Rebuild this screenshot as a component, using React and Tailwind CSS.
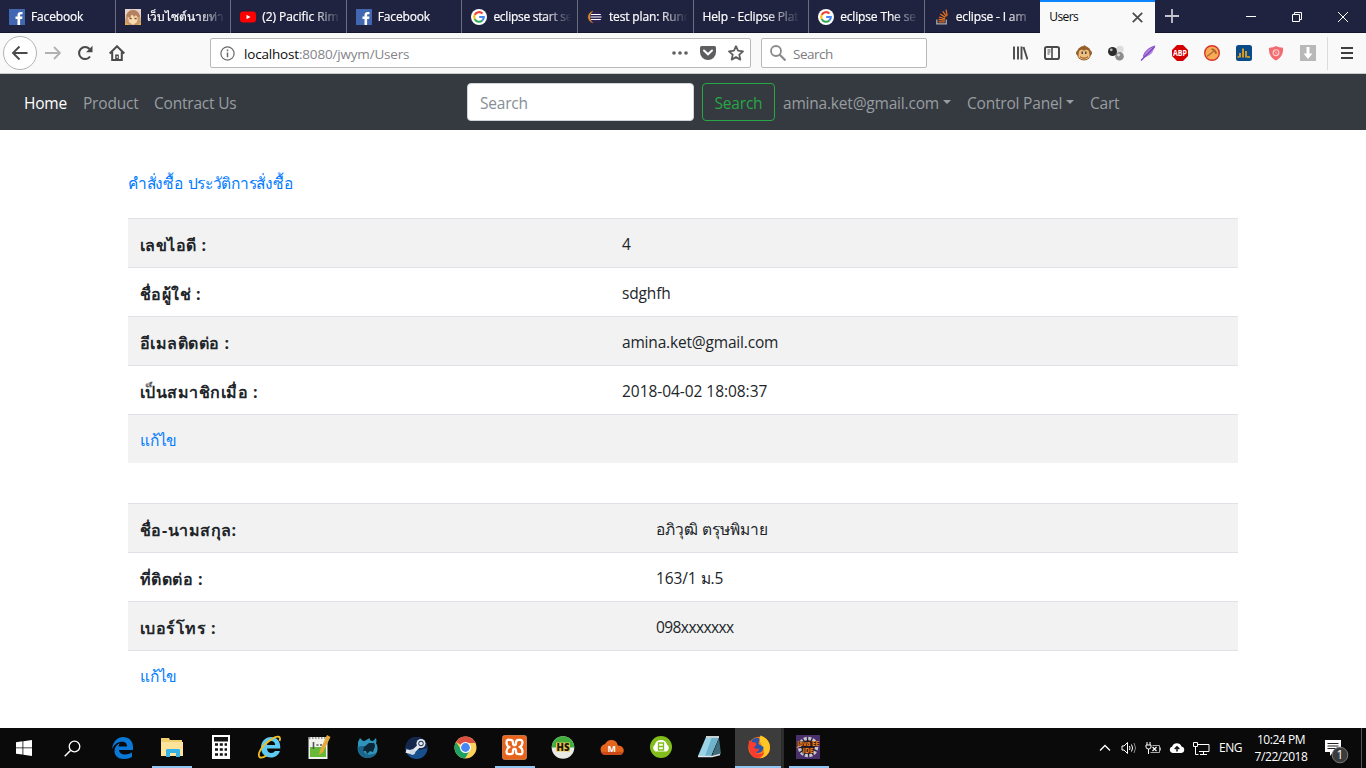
import React from "react";

const ui = "font-['Open_Sans','Noto_Sans',sans-serif]";

/* ---------- tab favicons ---------- */
const FacebookIcon = () => (
  <svg width="16" height="16" viewBox="0 0 16 16" className="shrink-0">
    <rect width="16" height="16" fill="#4267b2" />
    <path d="M8.500 16V10h-2V7.500h2V6c0-2 1.200-3 3-3h2v2.300h-1.300c-.9 0-1.100.5-1.100 1.200v1h2.400l-.4 2.500h-2v6z" fill="#fff" />
  </svg>
);
const AnimeIcon = () => (
  <svg width="16" height="16" viewBox="0 0 16 16" className="shrink-0">
    <rect width="16" height="16" fill="#e3d3cb" />
    <path d="M0 16C0 7 2 1 8 1s8 6 8 15z" fill="#c99a72" />
    <path d="M3 8c2-3 8-3 10 0l-1 5-4 3-4-3z" fill="#f8dcae" />
    <path d="M1 7c2-7 11-8 14 0l-2 2-2-3-2 2-2-3-2 4-2-1z" fill="#b5805f" />
    <path d="M4.500 9.500h2.200M9.500 9.500h2.200" stroke="#8a4a3c" strokeWidth="1.300" />
    <path d="M0 16v-3l4 3zM16 16v-3l-4 3z" fill="#e6b04f" />
  </svg>
);
const YoutubeIcon = () => (
  <svg width="16" height="16" viewBox="0 0 16 16" className="shrink-0">
    <rect x="0" y="2.500" width="16" height="11" rx="3" fill="#f00" />
    <path d="M6.500 5.700v4.600l4-2.300z" fill="#fff" />
  </svg>
);
const GoogleIcon = () => (
  <svg width="16" height="16" viewBox="0 0 16 16" className="shrink-0">
    <circle cx="8" cy="8" r="8" fill="#fff" />
    <g fill="none" strokeWidth="2.100">
      <path d="M11.500 4.600A4.800 4.800 0 0 0 3.700 5.900" stroke="#ea4335" />
      <path d="M3.700 5.900a4.800 4.800 0 0 0 0 4.200" stroke="#fbbc05" />
      <path d="M3.700 10.100a4.800 4.800 0 0 0 7.600 1.300" stroke="#34a853" />
      <path d="M11.300 11.400A4.500 4.500 0 0 0 12.800 8H8.200" stroke="#4285f4" />
    </g>
  </svg>
);
const EclipseIcon = () => (
  <svg width="16" height="16" viewBox="0 0 16 16" className="shrink-0">
    <path d="M6 2C-.500 4-.500 12 6 14 3 11.500 3 4.500 6 2z" fill="#e0892b" stroke="#e0892b" strokeWidth=".3" />
    <circle cx="8.900" cy="8" r="5.900" fill="#2c2255" />
    <path d="M4 5.500h9.800M3.500 8h11M4 10.500h9.800" stroke="#fff" strokeWidth="1.200" />
  </svg>
);
const StackIcon = () => (
  <svg width="16" height="16" viewBox="0 0 16 16" className="shrink-0">
    <path d="M2.800 10.500v4.300h9.500v-4.300" fill="none" stroke="#a9abb0" strokeWidth="1.300" />
    <g stroke="#e8701a" strokeWidth="1.300">
      <path d="M4.500 12.800h6.300M4.600 10.500l6.200.7M5 8l6 1.800M6.200 5l5.300 3.400M8.800 2.300l3.700 5M12 .700l1.200 6" />
    </g>
  </svg>
);

const tabs = [
  [FacebookIcon, "Facebook", "tracking-[-0.150px]"],
  [AnimeIcon, "เว็บไซต์นายท่า", "tracking-[-0.100px]"],
  [YoutubeIcon, "(2) Pacific Rim", "tracking-[-0.050px]"],
  [FacebookIcon, "Facebook", "tracking-[-0.150px]"],
  [GoogleIcon, "eclipse start se", "tracking-[-0.250px]"],
  [EclipseIcon, "test plan: Runn", "tracking-[-0.150px]"],
  [null, "Help - Eclipse Plat", "tracking-[-0.150px]"],
  [GoogleIcon, "eclipse The se", "tracking-[-0.150px]"],
  [StackIcon, "eclipse - I am", "tracking-[-0.150px]"],
];

function TabBar() {
  return (
    <div className="flex h-[33px] bg-[#202340] text-[12px] text-white border-b border-[#15172e]">
      {tabs.map(([Icon, label, track], i) => (
        <div key={i} className={"flex h-[33px] w-[115.600px] shrink-0 items-center pl-[9px] " + (i < 8 ? "border-r border-[#6b6d80]" : "")}>
          {Icon && <span className="mr-[6px]"><Icon /></span>}
          <span className={"block h-[20px] overflow-hidden whitespace-nowrap leading-[20px] [-webkit-text-stroke:0.2px_#fff] [mask-image:linear-gradient(to_right,#000_64%,transparent_98%)] " + (Icon ? "w-[80px] " : "w-[99px] ") + track}>
            {label}
          </span>
        </div>
      ))}
      <div className="flex h-[33px] w-[115px] shrink-0 items-center justify-between border-t-2 border-[#0a84ff] bg-[#f9f9fa] pl-[9px] pr-[12px] text-[#0c0c0d]">
        <span className="pb-[1px] tracking-[-0.600px]">Users</span>
        <svg className="mb-[1px]" width="11" height="11" viewBox="0 0 10 10"><path d="M.700.700l8.600 8.600M9.300.700L.700 9.300" stroke="#4c4c4f" strokeWidth="1.600" /></svg>
      </div>
      <div className="flex flex-1 items-center pl-[10px]">
        <svg width="14" height="14" viewBox="0 0 14 14"><path d="M7 0v14M0 7h14" stroke="#c5c6cf" strokeWidth="1.800" /></svg>
        <div className="ml-auto flex items-center">
          <svg width="46" height="32" viewBox="0 0 46 32"><path d="M18 16.500h10" stroke="#fff" /></svg>
          <svg width="46" height="32" viewBox="0 0 46 32"><path d="M18.500 14.500h7v7h-7zM20.500 14.500v-2h7v7h-2" fill="none" stroke="#fff" /></svg>
          <svg width="46" height="32" viewBox="0 0 46 32"><path d="M18 12l10 10M28 12L18 22" stroke="#fff" /></svg>
        </div>
      </div>
    </div>
  );
}

/* ---------- toolbar ---------- */
const extensions = [
  <g key="lib"><path d="M2 1.500v13M6 1.500v13M9.500 1.500v13M11.500 2l4 12.500" stroke="#4a4a4c" strokeWidth="1.900" fill="none" /></g>,
  <g key="side" fill="none" stroke="#4a4a4c"><rect x="1" y="2" width="14" height="12" rx="1.800" strokeWidth="2" /><path d="M8 2v12" strokeWidth="1.600" /><path d="M3.500 5h3M3.500 7h3M3.500 9h2" /></g>,
  <g key="monkey"><circle cx="2.200" cy="8" r="2.200" fill="#8b5a2b" /><circle cx="13.800" cy="8" r="2.200" fill="#8b5a2b" /><circle cx="8" cy="8.300" r="7.200" fill="#94602a" /><path d="M6 2l3-2 1 3z" fill="#94602a" /><path d="M2.800 8c0-4 4.200-4 5.200-2 1-2 5.200-2 5.200 2l.5 3.500c-2 4-9.400 4-11.400 0z" fill="#eebf7e" /><path d="M6.200 6.500v2.500M9.800 6.500v2.500" stroke="#333" strokeWidth="1.300" /><path d="M4 11.500c2 2.200 6 2.200 8 0" stroke="#8a4b1f" fill="none" /></g>,
  <g key="balls"><circle cx="12" cy="4.500" r="3.700" fill="#dcdcdc" /><circle cx="11.500" cy="11.300" r="4.300" fill="#8c8c8c" /><circle cx="10.500" cy="10" r="1.400" fill="#ddd" /><circle cx="4.500" cy="6.500" r="4.500" fill="#2c2c2c" /><circle cx="3.300" cy="4.800" r="1.400" fill="#bbb" /></g>,
  <g key="feather"><path d="M15.500.500C9 2 3.500 6 2.800 12.500 8 12 12 9 12.800 6.500z" fill="#b48ae2" /><path d="M14.500 2L1 15.500" stroke="#7a3fbd" strokeWidth="1.300" /><path d="M15 1C9 3 5 6 3.500 11.500" stroke="#8d55cc" fill="none" /></g>,
  <g key="abp"><path d="M5 0h6l5 5v6l-5 5H5l-5-5V5z" fill="#d40000" /><text x="8" y="11" fontSize="8" fontWeight="700" fill="#fff" textAnchor="middle" textLength="14" lengthAdjust="spacingAndGlyphs">ABP</text></g>,
  <g key="hammer"><circle cx="8" cy="8" r="7.300" fill="#f8ab55" stroke="#d8322a" strokeWidth="1.400" /><path d="M3 11.500L10 6" stroke="#b06a35" strokeWidth="1.400" /><path d="M7.500 4.200q3.500.3 4.700 4.500" stroke="#a86030" strokeWidth="1.800" fill="none" /></g>,
  <g key="chart"><rect width="16" height="16" rx="2.500" fill="#0a4a86" /><path d="M4 12.500V8M7 12.500V3.500M10 12.500V6M11 12h3M1.500 12h1.500" stroke="#f5a81c" strokeWidth="1.700" /></g>,
  <g key="shield"><path d="M8 1q3 1.800 7 1.800C15.500 9 13 13 8 15.500 3 13 .500 9 1 2.800 5 2.800 8 1 8 1z" fill="#f36a6f" /><circle cx="8" cy="7.700" r="2.900" fill="none" stroke="#fbd0d0" strokeWidth="1.100" /><path d="M6.300 6.200l3.400 3" stroke="#fbd0d0" /></g>,
  <g key="down"><rect width="16" height="16" fill="#b8b8b8" /><path d="M6.500 2h3v6.500h3L8 14 3.500 8.500h3z" fill="#fff" /></g>,
];

function Toolbar() {
  return (
    <div className="flex h-[41px] items-center border-b border-[#c9c9cc] bg-[#f9f9fa]">
      <div className="ml-[3px] flex h-[34px] w-[34px] items-center justify-center rounded-full border border-[#b4b4b6] bg-white">
        <svg width="18" height="16" viewBox="0 0 18 16"><path d="M16.500 8H2M8.500 1.500L2 8l6.500 6.500" fill="none" stroke="#4a4a4c" strokeWidth="1.900" /></svg>
      </div>
      <svg className="ml-[8px]" width="16" height="16" viewBox="0 0 16 16"><path d="M0 8h14M9 2l6 6-6 6" fill="none" stroke="#b2b2b4" strokeWidth="1.900" /></svg>
      <svg className="ml-[16px]" width="16" height="16" viewBox="0 0 16 16"><path d="M13 11.500A6 6 0 1 1 12.500 4" fill="none" stroke="#4a4a4c" strokeWidth="2.100" /><path d="M15.500.800v6.500H9z" fill="#4a4a4c" /></svg>
      <svg className="ml-[16px]" width="16" height="16" viewBox="0 0 16 16"><path d="M.700 8.500L8 1.300l7.300 7.200M3.200 7v8h9.600V7" fill="none" stroke="#4a4a4c" strokeWidth="2" /><path d="M6.200 9.500h3.600v5.500H6.200z" fill="#4a4a4c" /><path d="M8.200 11v2" stroke="#fff" /></svg>

      <div className="ml-[85px] flex h-[30px] w-[541px] items-center rounded-[2px] border border-[#b9b9bb] bg-white pl-[9px] pr-[6px]">
        <svg width="15" height="15" viewBox="0 0 15 15"><circle cx="7.500" cy="7.500" r="6.600" fill="none" stroke="#6a6a6c" strokeWidth="1.200" /><path d="M7.500 6.500v4.800M7.500 3.500v1.700" stroke="#6a6a6c" strokeWidth="1.500" /></svg>
        <span className="ml-[9px] pt-[2px] text-[13.500px] tracking-[-0.180px] text-[#85858a]"><span className="text-[#0c0c0d]">localhost</span>:8080/jwym/Users</span>
        <svg className="ml-auto" width="16" height="16" viewBox="0 0 16 16" fill="#5e5e60"><circle cx="2" cy="8" r="1.800" /><circle cx="8" cy="8" r="1.800" /><circle cx="14" cy="8" r="1.800" /></svg>
        <svg className="ml-[12px]" width="16" height="16" viewBox="0 0 16 16"><path d="M1.500 1h13Q16 1 16 2.500V7a8 8 0 0 1-16 0V2.500Q0 1 1.500 1z" fill="#5e5e60" /><path d="M4 5.500l4 3.800 4-3.800" fill="none" stroke="#fff" strokeWidth="2" strokeLinecap="round" /></svg>
        <svg className="ml-[12px]" width="16" height="16" viewBox="0 0 16 16"><path d="M8 1.200l2 4.500 5 .6-3.700 3.300 1 5L8 12.100l-4.300 2.500 1-5L1 6.300l5-.6z" fill="none" stroke="#5e5e60" strokeWidth="1.800" strokeLinejoin="round" /></svg>
      </div>

      <div className="ml-[10px] flex h-[30px] w-[166px] items-center rounded-[2px] border border-[#b9b9bb] bg-white pl-[8px]">
        <svg width="16" height="16" viewBox="0 0 16 16"><circle cx="6" cy="6" r="5" fill="none" stroke="#8a8a8c" strokeWidth="1.800" /><path d="M9.500 9.500l6 6" stroke="#8a8a8c" strokeWidth="2.200" /></svg>
        <span className="ml-[7px] pt-[2px] text-[13.500px] tracking-[-0.500px] text-[#7c7c80]">Search</span>
      </div>

      <div className="ml-[77px] flex">
        {extensions.map((drawing, i) => (
          <div key={i} className="flex w-[32px] justify-center"><svg width="16" height="16" viewBox="0 0 16 16">{drawing}</svg></div>
        ))}
      </div>
      <div className="ml-[3px] h-[33px] w-px bg-[#dcdcde]" />
      <svg className="ml-[13px]" width="12" height="14" viewBox="0 0 12 14"><path d="M0 2h12M0 7h12M0 12h12" stroke="#3e3e40" strokeWidth="2" /></svg>
    </div>
  );
}

/* ---------- page ---------- */
const Caret = () => <span className="ml-[4px] mt-[-4px] h-0 w-0 border-x-[4.500px] border-t-[4.500px] border-x-transparent border-t-[#9a9da0]" />;

function Navbar() {
  return (
    <nav className="flex h-[56px] items-center bg-[#343a40] pl-[24px] text-[15.500px] tracking-[-0.200px] text-[#9a9da0]">
      <span className="w-[59px] pt-[4px] text-white">Home</span>
      <span className="w-[71px] pt-[4px]">Product</span>
      <span className="w-[313px] pt-[4px]">Contract Us</span>
      <div className="flex h-[38px] w-[227px] items-center rounded-[4px] border border-[#ced4da] bg-white pl-[12px] pt-[4px] text-[#868e96]">Search</div>
      <div className="ml-[8px] flex h-[38px] w-[73px] items-center justify-center rounded-[4px] border border-[#28a745] pt-[4px] text-[#28a745]">Search</div>
      <span className="ml-[8px] flex w-[184px] items-center whitespace-nowrap pt-[4px]">amina.ket@gmail.com<Caret /></span>
      <span className="flex w-[123px] items-center whitespace-nowrap pt-[4px]">Control Panel<Caret /></span>
      <span className="pt-[4px]">Cart</span>
    </nav>
  );
}

function Table({ rows, col }) {
  return (
    <div className="w-[1110px]">
      {rows.map(([label, value, track], i) => (
        <div key={i} className="flex h-[49px] items-center border-t border-[#dee2e6] pl-[12px] pt-[4px] odd:bg-[#f2f2f2]">
          {value ? (
            <>
              <span className={"text-[16px] font-bold tracking-[0.480px] " + col}>{label}</span>
              <span className={track}>{value}</span>
            </>
          ) : (
            <a className="tracking-[-0.250px] text-[#007bff]">{label}</a>
          )}
        </div>
      ))}
    </div>
  );
}

/* ---------- taskbar ---------- */
const apps = [
  { k: "edge", d: <path d="M2 14C3 6 8 2 13 2c6 0 10 4 10 10v3H9c.3 3 3 4.500 6 4.500 2.500 0 5-.7 7-2v4.300c-2 1.500-5 2.200-8 2.200-6 0-9.500-3.500-9.500-8 0-3.500 2-6.500 5.500-8-.9 1-1.300 2.200-1.400 3.500H17c0-3-1.500-4.800-5-4.800-4 0-7.500 2.300-10 7.300z" fill="#0a78d7" /> },
  { k: "files", on: true, d: <g><path d="M2 3h8l1 2h12v16H2z" fill="#f0cf6e" /><path d="M2 7h22v14H2z" fill="#fde49a" /><path d="M7 22v-7q0-1 1-1h12q1 0 1 1v7h-4v-4h-6v4z" fill="#35b3e6" /></g> },
  { k: "calc", d: <g><path d="M4 0h18v24H4z" fill="#fff" /><path d="M6 2h14v4.500H6z" fill="#111" /><path d="M7 9.500h12M7 14.500h12M7 19.500h12" stroke="#111" strokeWidth="2.500" strokeDasharray="3 1.800" /></g> },
  { k: "ie", d: <g transform="translate(1 0)"><path d="M13 2c6 0 9.500 4 9.300 11.500H9c.3 3 2 4.500 4.300 4.500 1.800 0 3-.8 3.600-2h5c-1.300 4-4.500 6.500-9 6.500C7 22.500 3 18.500 3 12.500S7.500 2 13 2zM9 10h8.200c-.2-2.500-1.700-4-4-4S9.300 7.500 9 10z" fill="#5ecbf4" /><path d="M21.500 6c2-5-2-6-9-1C4 10-1 19 1.500 22c1 1 4 .5 7-1.500" fill="none" stroke="#f3bd23" strokeWidth="1.800" /></g> },
  { k: "npp", d: <g><path d="M2.500 2h19v22h-19z" fill="#f1f2ec" /><path d="M4 12h16v10H4z" fill="#66ba35" /><path d="M3 3h18" stroke="#999" strokeDasharray="1.500 1.500" strokeWidth="2" /><path d="M7.500 7v7M10.500 10h2M14 10h2" stroke="#555" strokeWidth="1.600" /><path d="M21 0L14 15l-1 5 4-3L24.500 2z" fill="#e6a93b" /></g> },
  { k: "fox", d: <g><path d="M3 7l2-4 3 3q3 0 3-1l4-2q-1 3 3 3l3-3q1 4 0 5c4 7 0 14-7 15C7 24 1 18 3 10z" fill="#2f94bb" /><path d="M3 12C2 18 7 23 13 23q5 0 8-5-9 4-12-1-1-3 1-6l-4 0z" fill="#1a6589" /><path d="M9 12l5-4h5q2 3 0 6l-1 3-3-1-3 3-1-3H8z" fill="#0d2636" /></g> },
  { k: "steam", d: <g><circle cx="12.500" cy="13" r="11" fill="#17508c" /><path d="M1.500 13a11 11 0 0 1 22 0q-11 4-22 0z" fill="#14264a" /><path d="M2 16l6 1.500L15 11" stroke="#e5e9ee" strokeWidth="3.500" fill="none" /><circle cx="17" cy="8.500" r="4.500" fill="#e5e9ee" /><circle cx="17" cy="8.500" r="2.700" fill="#1d3355" /><circle cx="17" cy="8.500" r="1.800" fill="#e5e9ee" /><circle cx="8.500" cy="17" r="2.800" fill="#cfd8e3" /></g> },
  { k: "chrome", d: <g><circle cx="12.500" cy="12.500" r="11" fill="#fdd25a" /><path d="M12.500 12.500L3 7A11 11 0 0 1 22 7L22.500 8H12.500z" fill="#dc5044" /><path d="M3 7A11 11 0 0 0 12 23.500L17 15 8.500 15z" fill="#1da261" /><circle cx="12.500" cy="12.500" r="5.500" fill="#fff" /><circle cx="12.500" cy="12.500" r="4.400" fill="#4587f3" /></g> },
  { k: "xampp", on: true, d: <g><rect x="0.500" y="0.500" width="24" height="24" rx="2" fill="#e8641b" stroke="#f4a071" strokeWidth=".6" /><path d="M7 4.800h1.500q2.500 0 2.500 2.700v.5q0 2.200 1.500 2.200T14 8v-.5q0-2.700 2.500-2.700H18q2.500 0 2.500 2.700T18 12q2.500 1.500 2.500 4.500T18 19.200h-1.500q-2.500 0-2.500-2.700V16q0-2.200-1.500-2.200T11 16v.5q0 2.700-2.500 2.700H7q-2.500 0-2.500-2.700T7 12Q4.500 10.500 4.500 7.500T7 4.800z" fill="none" stroke="#fff" strokeWidth="2.300" /></g> },
  { k: "hs", d: <g><circle cx="12" cy="12.500" r="11.300" fill="#e9e9e6" /><path d="M.700 12.500a11.300 11.300 0 0 1 22.600 0z" fill="#43ad3e" /><path d="M5 7.500h14v9H5z" fill="#ecc848" /><text x="12" y="16" fontSize="11" fontWeight="800" textAnchor="middle" fill="#1b1b10" textLength="13" lengthAdjust="spacingAndGlyphs">HS</text></g> },
  { k: "cloudm", d: <g><path d="M5 20a5.500 5.500 0 0 1-1-10.500C6 9.500 6 5 11 5c5 0 6 2.500 7 5.500 8 .5 7 9.500 1 9.500z" fill="#e5651d" /><path d="M1 17q11-1 22 0-1 3-4 3H5q-3 0-4-3z" fill="#cb4a17" /><text x="11.800" y="16.500" fontSize="9" fontWeight="700" fill="#fff" textAnchor="middle">M</text></g> },
  { k: "green", d: <g><circle cx="12" cy="12" r="11" fill="#82bd1b" /><path d="M6.500 16.500a4 4 0 0 1-.5-7C7 6 9.500 5 12 5s5 1 6 4.500a4 4 0 0 1-.5 7z" fill="#fff" /><path d="M9.500 8h5v7h-5zM9.500 11.500h5" fill="none" stroke="#82bd1b" strokeWidth="1.300" /></g> },
  { k: "note", d: <g><path d="M8 2h13L13 21H0z" fill="#9ad4e6" /><path d="M14 2h7L13 21H7z" fill="#6fb2cc" /><path d="M21 3l2 16-9 1.500z" fill="#3f6a7a" /><path d="M8 2h13" stroke="#c9d3d6" strokeWidth="2" /><path d="M0 21.500h14l8-2" fill="none" stroke="#dfe9ec" strokeWidth="1.300" /></g> },
  { k: "firefox", active: true, d: <g><circle cx="12.200" cy="12.500" r="10.800" fill="#ff7a18" /><path d="M13.500.500c6 2 9.500 6.500 9.500 12.500a10.700 10.700 0 0 1-10 10.300C17.500 21 18.500 15 14.500 10q-3-5-1-9.500z" fill="#ffc626" /><path d="M4.500 5.500C7.500 2 11.500 2 12.500 4l-1 5 5 3q0 5-5 6-5 0-7-5z" fill="#2856a8" /><path d="M2 5l2.500 2 4 .5 1 2L7 12.500q2 2 5.500 1-1 4-5 3.500 5 4 10 0-2 6-8 6C4.500 22.500.500 17 2 5z" fill="#fa3c2e" /></g> },
  { k: "jee", on: true, d: <g><rect width="24" height="24" fill="#49306b" /><circle cx="12" cy="12" r="8.500" fill="#1b1524" stroke="#c9c5cd" strokeWidth="3.500" strokeDasharray="3 1.450" /><path d="M1 6.500h22v4.500H1zM6.500 12.500h11v6h-11z" fill="#3a2410" /><text x="12" y="11" fontSize="6.500" fontWeight="700" fill="#ef7c22" textAnchor="middle" textLength="22" lengthAdjust="spacingAndGlyphs">Java EE</text><text x="12" y="18.200" fontSize="7" fontWeight="700" fill="#ef7c22" textAnchor="middle" textLength="11" lengthAdjust="spacingAndGlyphs">IDE</text></g> },
];

function Taskbar() {
  return (
    <footer className="flex h-[40px] bg-[#0a0a0a] text-white">
      <div className="flex w-[48px] items-center justify-center"><svg width="16" height="16" viewBox="0 0 16 16"><path d="M0 2.200l6.500-.9v6.200H0zM7.300 1.200L16 0v7.500H7.300zM0 8.300h6.500v6.300L0 13.700zM7.300 8.300H16V16l-8.700-1.300z" fill="#fff" /></svg></div>
      <div className="flex w-[50px] items-center pl-[16px]"><svg width="17" height="17" viewBox="0 0 17 17"><circle cx="10.500" cy="6.500" r="5.300" fill="none" stroke="#fff" strokeWidth="1.300" /><path d="M6.500 10.500L.700 16.300" stroke="#fff" strokeWidth="1.500" /></svg></div>
      {apps.map(({ k, d, on, active }) => (
        <div key={k} className={"flex h-[40px] w-[49px] shrink-0 flex-col items-center pt-[7px] " + (active ? "border-r-[3px] border-[#2c2c2c] bg-[#3c3c3c]" : "")}>
          <svg width="25" height="25" viewBox="0 0 25 25" className={"shrink-0 " + (active ? "ml-[3px]" : "")}>{d}</svg>
          {(on || active) && <div className={"mt-auto h-[2px] bg-[#90c5f2] " + (active ? "w-[46px]" : "w-[40px]")} />}
        </div>
      ))}
      <div className="ml-auto flex items-center text-[12px]">
        <svg width="12" height="8" viewBox="0 0 12 8"><path d="M1 6.500l5-5 5 5" fill="none" stroke="#fff" strokeWidth="1.300" /></svg>
        <svg className="ml-[10px]" width="17" height="14" viewBox="0 0 17 14"><path d="M1 5h2l3.500-3.500v11L3 9H1z" fill="none" stroke="#fff" /><path d="M8.500 5q1 2 0 4M10.500 3.500q2.200 3.500 0 7" fill="none" stroke="#fff" /><path d="M13 2q3 5 0 10" fill="none" stroke="#888" /></svg>
        <svg className="ml-[7px]" width="17" height="14" viewBox="0 0 17 14"><path d="M2 1v3M5 1v3M1 4h5v2q0 2-2.500 2T1 6zM3.500 8v5" fill="none" stroke="#fff" /><path d="M7.500 4.500h7v7h-9" fill="none" stroke="#aaa" /><path d="M15.500 6.500v3" stroke="#aaa" /><path d="M7.500 6l4 4M11.500 6l-4 4" stroke="#fff" strokeWidth="1.200" /></svg>
        <svg className="ml-[7px]" width="16" height="12" viewBox="0 0 16 12"><path d="M3.500 11a3.400 3.400 0 0 1-.3-6.600A5 5 0 0 1 12.500 4.500 3.300 3.300 0 0 1 12.500 11z" fill="#fff" /><path d="M8 9.500V5.500M5.700 7L8 4.700 10.300 7" fill="none" stroke="#111" strokeWidth="1.500" /></svg>
        <svg className="ml-[8px]" width="17" height="14" viewBox="0 0 17 14"><path d="M5 3.500h11v7H6M10.500 10.500v3M7 13.500h7M.500 1.500h4v4h-4zM2.500 5.500v8h3" fill="none" stroke="#fff" /></svg>
        <span className="ml-[9px] w-[25px] tracking-[-0.450px]">ENG</span>
        <div className="ml-[7px] w-[60px] whitespace-nowrap pb-[1px] text-center leading-[17px] tracking-[-0.450px]"><div>10:24 PM</div><div>7/22/2018</div></div>
        <svg className="ml-[13px] mt-[8px]" width="28" height="26" viewBox="0 0 28 26"><path d="M1 1h16v12H9l-3 4v-4H1z" fill="#fff" /><path d="M3.500 4.500h11M3.500 7h11M3.500 9.500h8" stroke="#222" /><circle cx="16" cy="16" r="7.800" fill="#3b3b3b" stroke="#777" /><text x="16" y="20" fontSize="12" fill="#fff" textAnchor="middle">1</text></svg>
        <div className="ml-[9px] mr-[4px] h-[40px] w-px bg-[#555]" />
      </div>
    </footer>
  );
}

export default function App() {
  return (
    <div className={"flex h-[768px] w-[1366px] flex-col overflow-hidden bg-white " + ui}>
      <TabBar />
      <Toolbar />
      <Navbar />
      <main className="flex-1 pl-[128px] pt-[42px] text-[15.500px] text-[#212529]">
        <div className="mb-[22px] flex h-[24px] items-center gap-[5px] tracking-[-0.280px] text-[#007bff]">
          <a>คำสั่งซื้อ</a>
          <a>ประวัติการสั่งซื้อ</a>
        </div>
        <Table
          col="w-[482px]"
          rows={[
            ["เลขไอดี :", "4", "tracking-[-0.200px]"],
            ["ชื่อผู้ใช่ :", "sdghfh", "tracking-[-0.150px]"],
            ["อีเมลติดต่อ :", "amina.ket@gmail.com", "tracking-[-0.180px]"],
            ["เป็นสมาชิกเมื่อ :", "2018-04-02 18:08:37", "tracking-[-0.050px]"],
            ["แก้ไข"],
          ]}
        />
        <div className="h-[40px]" />
        <Table
          col="w-[516px]"
          rows={[
            ["ชื่อ-นามสกุล:", "อภิวุฒิ ตรุษพิมาย", "tracking-[0.020px]"],
            ["ที่ติดต่อ :", "163/1 ม.5", "tracking-[-0.100px]"],
            ["เบอร์โทร :", "098xxxxxxx", "tracking-[-0.580px]"],
            ["แก้ไข"],
          ]}
        />
      </main>
      <Taskbar />
    </div>
  );
}
